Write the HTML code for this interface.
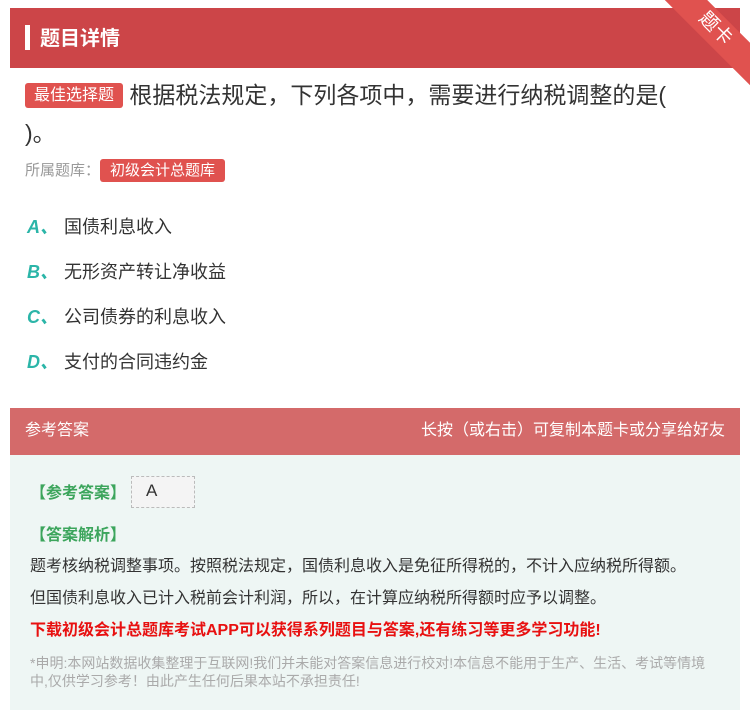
<!DOCTYPE html>
<html><head><meta charset="utf-8"><style>
*{margin:0;padding:0;box-sizing:border-box}
body{width:750px;height:710px;background:#fff;font-family:"Liberation Sans","Noto Sans CJK SC",sans-serif;position:relative;overflow:hidden}
.hdr{position:absolute;left:10px;top:8px;width:730px;height:60px;background:#cc4548}
.hdr .bar{position:absolute;left:15px;top:17px;width:5px;height:25px;background:#fff}
.hdr .t{position:absolute;left:30px;top:14px;color:#fff;font-size:20px;font-weight:bold}
.rib{position:absolute;right:-40px;top:14px;width:150px;height:30px;background:#e0524f;transform:rotate(45deg);color:#fff;font-size:19px;text-align:center;line-height:30px}
.tag{display:inline-block;background:#e0524f;color:#fff;border-radius:3px}
.q{position:absolute;left:25px;top:76px;font-size:23px;color:#333;line-height:38px;width:710px}
.q .tag{font-size:16px;padding:0 9px;line-height:25px;vertical-align:3px}
.lib{position:absolute;left:25px;top:159px;font-size:15px;color:#999;line-height:23px}
.lib .tag{padding:0 10px;font-size:15px}
.opt{position:absolute;left:27px;font-size:18px;color:#333}
.opt b{color:#2bb5a8;font-style:italic;display:inline-block;width:37px;font-size:18px}
.ah{position:absolute;left:10px;top:408px;width:730px;height:47px;background:#d46a6a;color:#fff;font-size:16px;line-height:45px;padding:0 15px}
.ah span{float:right}
.ab{position:absolute;left:10px;top:455px;width:730px;height:255px;background:#eef6f4}
.g{position:absolute;left:30px;color:#3ca55c;font-size:16px;font-weight:bold}
.tx{position:absolute;left:30px;font-size:16px;color:#333}
</style></head><body>
<div class="hdr"><div class="bar"></div><div class="t">题目详情</div></div>
<div class="rib">题卡</div>
<div class="q"><span class="tag">最佳选择题</span> 根据税法规定，下列各项中，需要进行纳税调整的是(<br>)。</div>
<div class="lib">所属题库：<span class="tag">初级会计总题库</span></div>
<div class="opt" style="top:213px"><b>A、</b>国债利息收入</div>
<div class="opt" style="top:258px"><b>B、</b>无形资产转让净收益</div>
<div class="opt" style="top:303px"><b>C、</b>公司债券的利息收入</div>
<div class="opt" style="top:348px"><b>D、</b>支付的合同违约金</div>
<div class="ah">参考答案<span>长按（或右击）可复制本题卡或分享给好友</span></div>
<div class="ab"></div>
<div class="g" style="top:479px">【参考答案】</div>
<div style="position:absolute;left:131px;top:476px;width:64px;height:32px;background:#f4f4f4;border:1px dashed #bbb;font-size:17px;color:#333;padding:4px 14px">A</div>
<div class="g" style="top:521px">【答案解析】</div>
<div class="tx" style="top:552px">题考核纳税调整事项。按照税法规定，国债利息收入是免征所得税的，不计入应纳税所得额。</div>
<div class="tx" style="top:584px">但国债利息收入已计入税前会计利润，所以，在计算应纳税所得额时应予以调整。</div>
<div class="tx" style="top:616px;color:#e81010;font-weight:bold">下载初级会计总题库考试APP可以获得系列题目与答案,还有练习等更多学习功能!</div>
<div class="tx" style="top:654px;font-size:14px;color:#aaa;width:680px;line-height:18px">*申明:本网站数据收集整理于互联网!我们并未能对答案信息进行校对!本信息不能用于生产、生活、考试等情境中,仅供学习参考！由此产生任何后果本站不承担责任!</div>
</body></html>
